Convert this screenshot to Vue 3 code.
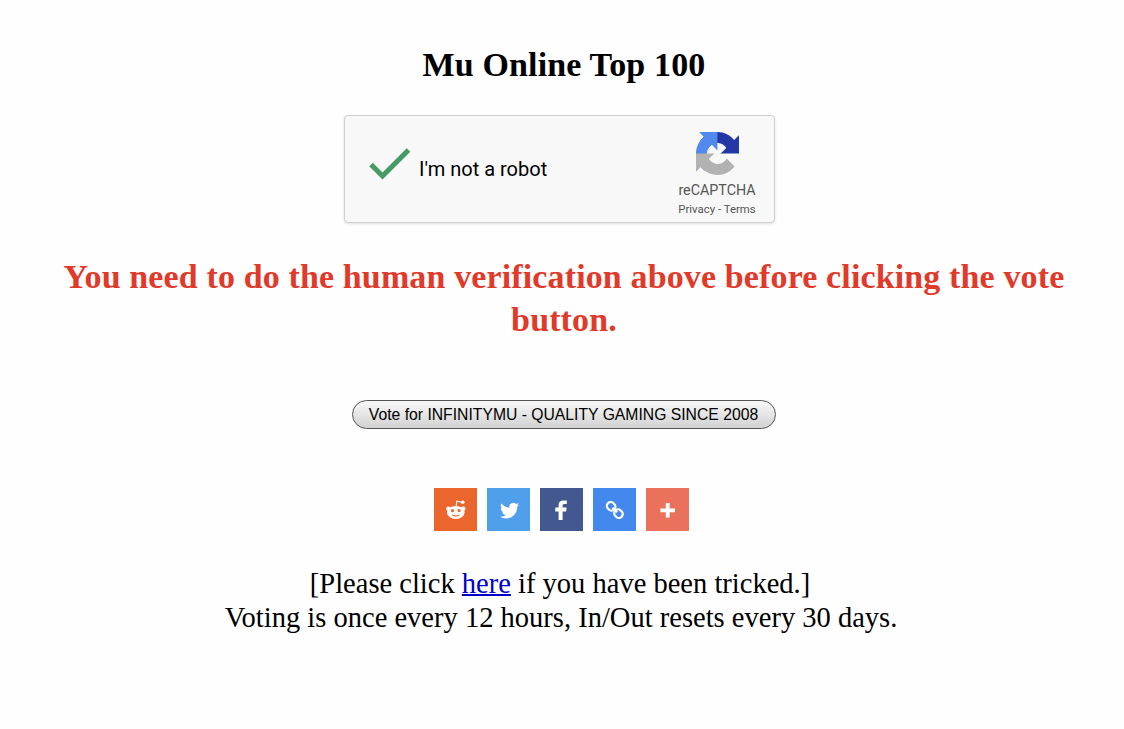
<script setup>
import { ref } from 'vue'

const site = ref('INFINITYMU - QUALITY GAMING SINCE 2008')
const networks = ['reddit', 'twitter', 'facebook', 'link', 'more']
</script>

<template>
  <main class="page">
    <h1>Mu Online Top 100</h1>

    <div class="captcha">
      <svg class="check" viewBox="0 0 42 32">
        <path d="M2 16.5 13.5 28 39.5 2" />
      </svg>
      <span class="label">I'm not a robot</span>
      <div class="brand">
        <svg class="logo" viewBox="0 0 64 64">
          <path fill="#2438a5" d="M64 31.955l-.033-1.37V4.687l-7.16 7.16C50.948 4.674 42.033.093 32.05.093c-10.4 0-19.622 4.96-25.458 12.64l11.736 11.86a15.55 15.55 0 0 1 4.754-5.334c2.05-1.6 4.952-2.906 8.968-2.906.485 0 .86.057 1.135.163 4.976.393 9.288 3.14 11.828 7.124l-8.307 8.307L64 31.953" />
          <path fill="#5289ee" d="M31.862.094l-1.37.033H4.594l7.16 7.16C4.58 13.147 0 22.06 0 32.046c0 10.4 4.96 19.622 12.64 25.458L24.5 45.768a15.55 15.55 0 0 1-5.334-4.754c-1.6-2.05-2.906-4.952-2.906-8.968 0-.485.057-.86.163-1.135.393-4.976 3.14-9.288 7.124-11.828l8.307 8.307L31.86.095" />
          <path fill="#b2b2b2" d="M.001 32.045l.033 1.37v25.898l7.16-7.16c5.86 7.173 14.774 11.754 24.76 11.754 10.4 0 19.622-4.96 25.458-12.64l-11.736-11.86a15.55 15.55 0 0 1-4.754 5.334c-2.05 1.6-4.952 2.906-8.968 2.906-.485 0-.86-.057-1.135-.163-4.976-.393-9.288-3.14-11.828-7.124l8.307-8.307L0 32.045" />
        </svg>
        <span class="name">reCAPTCHA</span>
        <span class="legal">Privacy - Terms</span>
      </div>
    </div>

    <h2>You need to do the human verification above before clicking the vote button.</h2>

    <button type="button">Vote for {{ site }}</button>

    <div class="share">
      <a v-for="network in networks" :key="network" :class="network">
        <svg v-if="network === 'reddit'" viewBox="0 0 43 43">
          <path class="line" d="M22 18.8 22.9 13.2 28 14.2" />
          <circle cx="28.8" cy="14.2" r="1.8" />
          <circle cx="14.4" cy="20.8" r="2.3" />
          <circle cx="29.2" cy="20.8" r="2.3" />
          <ellipse cx="21.8" cy="24.4" rx="8.8" ry="6.5" />
          <circle class="hole" cx="18.5" cy="22.6" r="1.6" />
          <circle class="hole" cx="25.1" cy="22.6" r="1.6" />
          <path class="smile" d="M18 26.9Q21.8 29.3 25.6 26.9" />
        </svg>
        <svg v-else-if="network === 'twitter'" viewBox="0 0 43 43">
          <path transform="translate(13 13) scale(.8)" d="M23.953 4.57a10 10 0 0 1-2.825.775 4.958 4.958 0 0 0 2.163-2.723c-.951.555-2.005.959-3.127 1.184a4.92 4.92 0 0 0-8.384 4.482C7.69 8.095 4.067 6.13 1.64 3.162a4.822 4.822 0 0 0-.666 2.475c0 1.71.87 3.213 2.188 4.096a4.904 4.904 0 0 1-2.228-.616v.06a4.923 4.923 0 0 0 3.946 4.827 4.996 4.996 0 0 1-2.212.085 4.936 4.936 0 0 0 4.604 3.417 9.867 9.867 0 0 1-6.102 2.105c-.39 0-.779-.023-1.17-.067a13.995 13.995 0 0 0 7.557 2.209c9.053 0 13.998-7.496 13.998-13.985 0-.21 0-.42-.015-.63A9.935 9.935 0 0 0 24 4.59z" />
        </svg>
        <svg v-else-if="network === 'facebook'" viewBox="0 0 43 43">
          <path d="M18.6 32V23.4H15.3V19.6H18.6V17C18.6 14 20.3 12.4 23.5 12.4 24.9 12.4 26.3 12.5 26.8 12.6V16H24.6C23 16 22.6 16.7 22.6 17.8V19.6H26.6L26.1 23.4H22.6V32Z" />
        </svg>
        <svg v-else-if="network === 'link'" viewBox="0 0 43 43">
          <g class="chain" transform="rotate(45 21.8 22)">
            <rect x="12.2" y="18.2" width="8.8" height="7.6" rx="3.6" />
            <rect x="22.6" y="18.2" width="8.8" height="7.6" rx="3.6" />
            <path d="M18.6 22H25" />
          </g>
        </svg>
        <svg v-else viewBox="0 0 43 43">
          <path d="M19.8 15H23.6V20.4H29V24.2H23.6V29.6H19.8V24.2H14.4V20.4H19.8Z" />
        </svg>
      </a>
    </div>

    <p class="notice">[Please click <a href="#">here</a> if you have been tricked.]</p>
    <p class="rules">Voting is once every 12 hours, In/Out resets every 30 days.</p>
  </main>
</template>

<style>
body {
  margin: 0;
  background: #fefefe;
}
</style>

<style scoped>
.page {
  display: flex;
  flex-direction: column;
  align-items: center;
  height: 729px;
  padding: 45px 40px 0;
  box-sizing: border-box;
  color: #000;
  font-family: 'Liberation Serif', serif;
  text-align: center;
}
h1,
h2 {
  margin: 0;
  font-size: 34px;
  font-weight: bold;
  letter-spacing: 0.13px;
}
h1 {
  margin-left: 4px;
  line-height: 40px;
}
.captcha {
  display: flex;
  width: 431px;
  height: 108px;
  margin: 30px 5px 0 0;
  box-sizing: border-box;
  border: 1px solid #d0d0d0;
  border-radius: 4px;
  background: #f8f8f8;
  box-shadow: 0 1px 3px rgba(0, 0, 0, 0.12);
  font-family: Roboto, sans-serif;
}
.check {
  width: 42px;
  height: 32px;
  margin: 32px 0 0 24px;
}
.check path {
  fill: none;
  stroke: #459b63;
  stroke-width: 5;
}
.label {
  margin: 41px 0 0 8px;
  font-size: 20px;
  line-height: 25px;
}
.brand {
  display: flex;
  flex-direction: column;
  align-items: center;
  width: 90px;
  margin: 16px 12px 0 auto;
  color: #555;
}
.logo {
  width: 43px;
  height: 43px;
}
.name {
  margin-top: 6px;
  font-size: 14.3px;
  line-height: 18px;
}
.legal {
  margin-top: 3px;
  font-size: 11.4px;
  line-height: 14px;
}
h2 {
  width: 1020px;
  margin: 32px 0 0 4px;
  color: #e13a2a;
  line-height: 43px;
}
button {
  width: 424px;
  height: 29px;
  margin: 59px 0 0 3px;
  padding: 0;
  border: 1.5px solid #555;
  border-radius: 15px;
  background: linear-gradient(#f8f8f8, #d2d2d2);
  color: #000;
  font-family: 'Liberation Sans', sans-serif;
  font-size: 15.72px;
  white-space: nowrap;
}
.share {
  display: flex;
  gap: 10px;
  margin: 59px 1px 0 0;
}
.share a {
  width: 43px;
  height: 43px;
}
.share svg {
  display: block;
  fill: #fff;
}
.reddit {
  background: #ea662d;
}
.reddit .line {
  fill: none;
  stroke: #fff;
  stroke-width: 1.1;
}
.reddit .hole {
  fill: #ea662d;
}
.reddit .smile {
  fill: none;
  stroke: #ea662d;
  stroke-width: 1.1;
}
.twitter {
  background: #4f9fea;
}
.facebook {
  background: #43588f;
}
.link {
  background: #4388ec;
}
.chain {
  fill: none;
  stroke: #fff;
  stroke-width: 2.2;
}
.more {
  background: #ea725c;
}
.notice,
.rules {
  margin: 0;
  font-size: 28.53px;
  line-height: 34px;
}
.notice {
  margin: 36px 4px 0 0;
}
.rules {
  margin-right: 2px;
}
.notice a {
  color: #0000c8;
  text-decoration-thickness: 2px;
}
</style>
